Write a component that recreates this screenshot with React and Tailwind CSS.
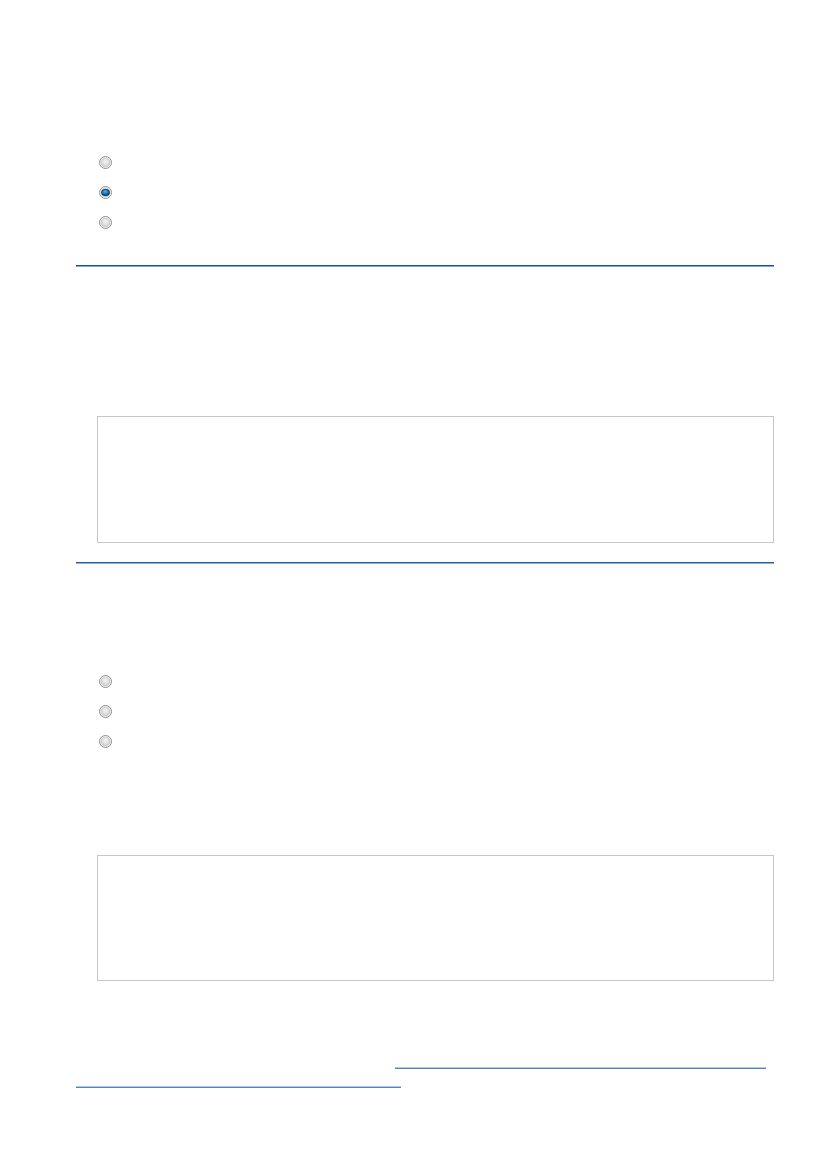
import React from "react";

function Radio({ checked }) {
  return (
    <svg width="13" height="13" viewBox="0 0 13 13" className="block">
      <defs>
        <radialGradient id="rgu" cx="50%" cy="40%" r="60%">
          <stop offset="0%" stopColor="#f4f4f4" />
          <stop offset="100%" stopColor="#cfcfcf" />
        </radialGradient>
        <radialGradient id="blue" cx="45%" cy="35%" r="70%">
          <stop offset="0%" stopColor="#5ab0e8" />
          <stop offset="60%" stopColor="#0b6cb8" />
          <stop offset="100%" stopColor="#083a6e" />
        </radialGradient>
      </defs>
      <circle cx="6.5" cy="6.5" r="6" fill="#ffffff" stroke="#8e8e8e" strokeWidth="1" />
      <circle cx="6.5" cy="6.5" r="4.6" fill="url(#rgu)" stroke="#b8b8b8" strokeWidth="0.6" />
      {checked && (
        <ellipse cx="6.5" cy="6.5" rx="4" ry="3.2" fill="url(#blue)" stroke="#0a2e52" strokeWidth="0.8" />
      )}
    </svg>
  );
}

function RadioGroup({ checkedIndex }) {
  return (
    <div className="pl-[23px] flex flex-col">
      {[0, 1, 2].map((i) => (
        <div key={i} className={`${i === 2 ? "h-[31px]" : "h-[30px]"} flex items-center`}>
          <Radio checked={i === checkedIndex} />
        </div>
      ))}
    </div>
  );
}

export default function App() {
  return (
    <div className="w-[827px] h-[1169px] bg-white" style={{ fontFamily: '"Liberation Sans", Arial, sans-serif' }}>
      <div className="pl-[76px] w-[774px]">
        <div className="h-[147px]" />
        <RadioGroup checkedIndex={1} />
        <div className="h-[27px]" />
        <div className="h-[2px] bg-[#1a5299] border-b border-[#7fa6d4]" />
        <div className="h-[149px]" />
        <div className="ml-[21px] h-[127px] border border-[#c6c6c6]" />
        <div className="h-[19px]" />
        <div className="h-[2px] bg-[#24609f] border-b border-[#8fb2da]" />
        <div className="h-[102px]" />
        <RadioGroup checkedIndex={-1} />
        <div className="h-[98px]" />
        <div className="ml-[21px] h-[126px] border border-[#c6c6c6]" />
        <div className="h-[86px]" />
        <div className="flex">
          <div className="ml-[319px] w-[371px] h-[2px] border-b border-[#5283c2] bg-[#b3cae6]" />
        </div>
        <div className="h-[17px]" />
        <div className="w-[325px] h-[2px] border-b border-[#5283c2] bg-[#b3cae6]" />
      </div>
    </div>
  );
}
